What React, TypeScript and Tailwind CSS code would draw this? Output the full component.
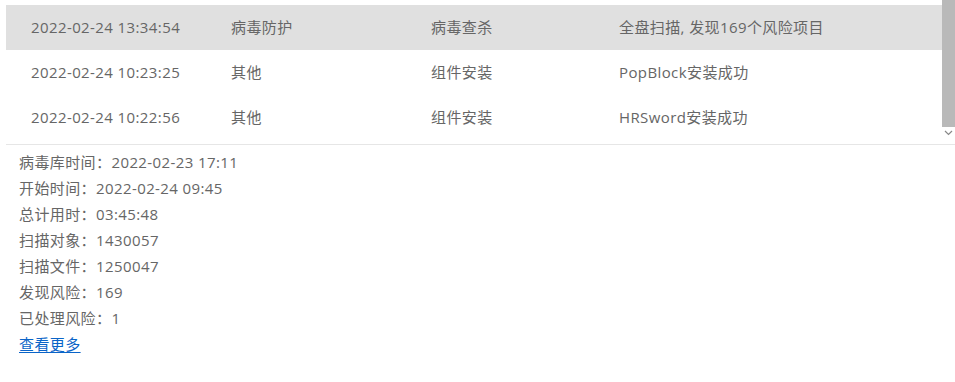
const rows = [
  { time: "2022-02-24 13:34:54", module: "病毒防护", type: "病毒查杀", detail: "全盘扫描, 发现169个风险项目", active: true },
  { time: "2022-02-24 10:23:25", module: "其他", type: "组件安装", detail: "PopBlock安装成功" },
  { time: "2022-02-24 10:22:56", module: "其他", type: "组件安装", detail: "HRSword安装成功" },
];

const summary = [
  ["病毒库时间", "2022-02-23 17:11"],
  ["开始时间", "2022-02-24 09:45"],
  ["总计用时", "03:45:48"],
  ["扫描对象", "1430057"],
  ["扫描文件", "1250047"],
  ["发现风险", "169"],
  ["已处理风险", "1"],
];

export default function App() {
  return (
    <div
      className="w-[955px] h-[382px] bg-white pl-[6px] text-[15px] tracking-[0.4px] text-[#666]"
      style={{ fontFamily: '"Open Sans", "Noto Sans CJK SC", sans-serif' }}
    >
      {/* Log table with scrollbar */}
      <div className="flex h-[145px] border-b border-[#e6e6e6]">
        <div className="flex-1 pt-[5px]">
          {rows.map((r) => (
            <div
              key={r.time}
              className={`grid grid-cols-[200px_200px_188px_1fr] items-center h-[45px] pl-[25px] ${
                r.active ? "bg-[#e0e0e0]" : ""
              }`}
            >
              <span>{r.time}</span>
              <span>{r.module}</span>
              <span>{r.type}</span>
              <span>{r.detail}</span>
            </div>
          ))}
        </div>
        <div className="w-[13px] flex flex-col">
          <div className="h-[127px] bg-[#b9b9b9]" />
          <div className="flex justify-center pt-[3px]">
            <svg width="9" height="6" viewBox="0 0 9 6" fill="none" stroke="#888" strokeWidth="1.2">
              <path d="M1 1l3.5 3.5L8 1" />
            </svg>
          </div>
        </div>
      </div>

      {/* Scan summary */}
      <div className="pl-[13px] pt-[4px] leading-[26px]">
        {summary.map(([k, v]) => (
          <div key={k}>
            {k}：{v}
          </div>
        ))}
        <a href="#" className="text-[#0a64c8] underline underline-offset-2">
          查看更多
        </a>
      </div>
    </div>
  );
}
